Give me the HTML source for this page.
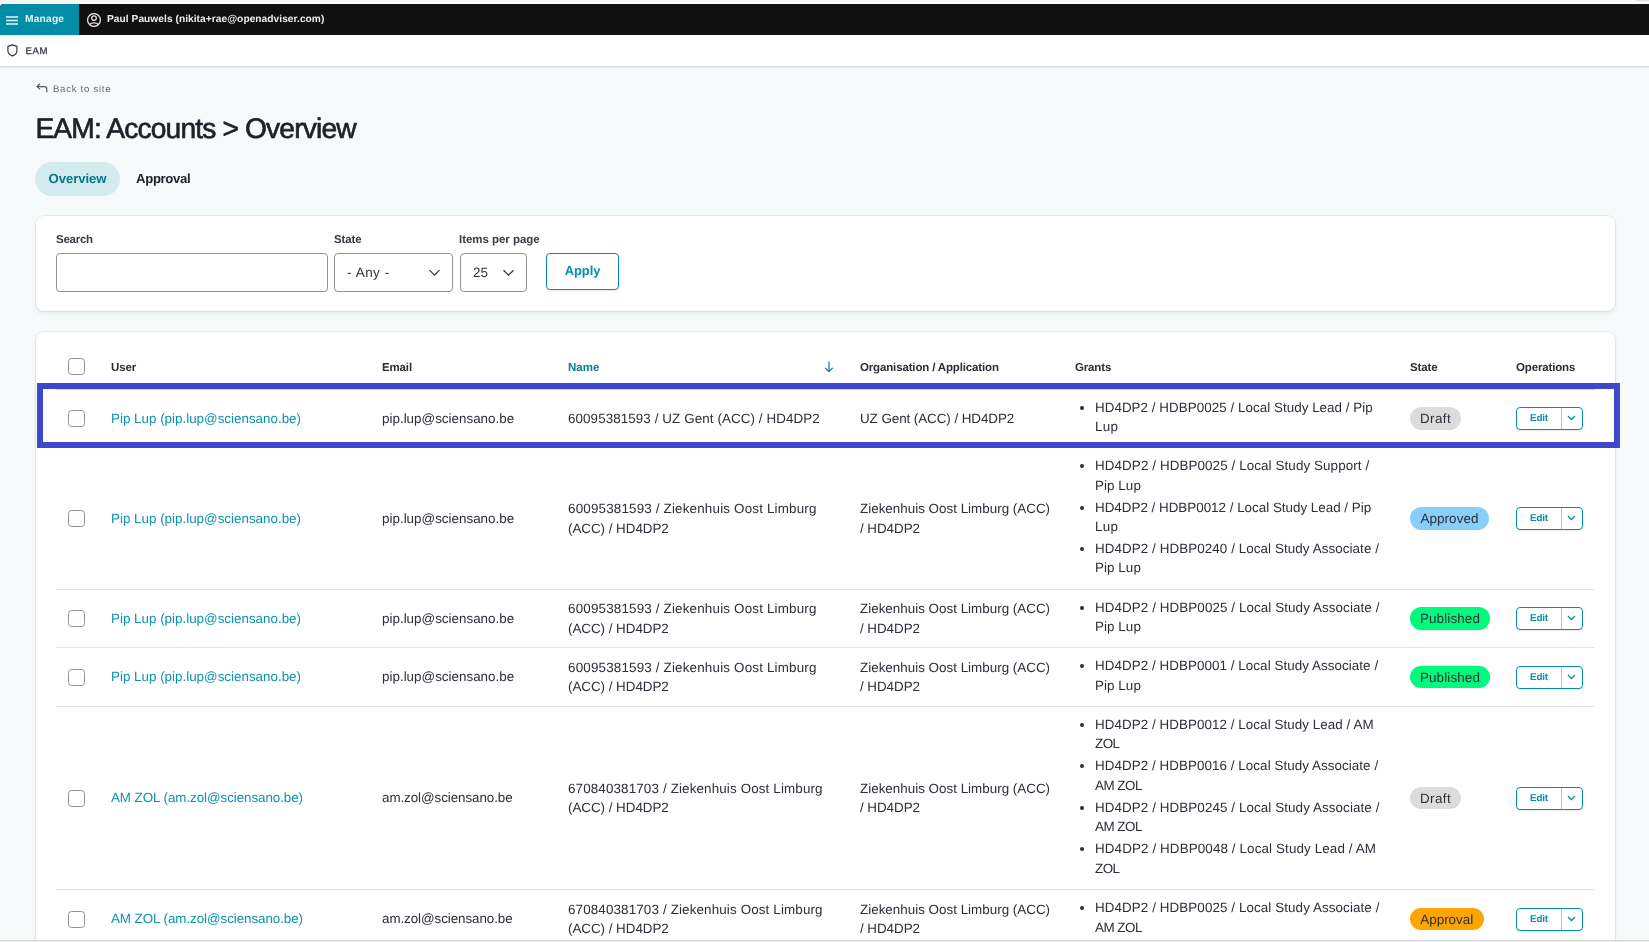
<!DOCTYPE html>
<html lang="en">
<head>
<meta charset="utf-8">
<title>EAM: Accounts &gt; Overview</title>
<style>
*{box-sizing:border-box;margin:0;padding:0}
html,body{width:1649px;height:942px;overflow:hidden}
body{font-family:"Liberation Sans",sans-serif;background:#f7fafb;color:#2d2e38;position:relative;font-size:13.5px}
a{text-decoration:none;color:inherit}
.abs{position:absolute}
#page{position:absolute;left:0;top:0;width:1649px;height:942px;overflow:hidden;will-change:transform;text-rendering:geometricPrecision;background:#f7fafb}
/* window chrome */
#topstrip{left:0;top:0;width:1649px;height:4px;background:#f6f6f6;border-bottom:1px solid #fdfbfb}
#toolbar{left:0;top:4px;width:1649px;height:31px;background:#101010;border-top-left-radius:4px}
#manage{left:0;top:0;width:79px;height:31px;background:#028da6;border-top-left-radius:4px;color:#fff}
#manage span{position:absolute;left:25px;top:11.4px;line-height:1;font-size:10.2px;font-weight:bold;letter-spacing:.22px;color:#e6f5f8}
#user{left:107px;top:11.4px;line-height:1;font-size:10.2px;font-weight:bold;color:#efefef;letter-spacing:.04px;white-space:nowrap}
#secbar{left:-6px;top:35px;width:1661px;height:31px;background:#fff;box-shadow:0 1px 2px rgba(0,0,20,.18)}
#secbar span{position:absolute;left:31.4px;top:11.7px;line-height:1;font-size:9.6px;color:#33343e;letter-spacing:.7px;-webkit-text-stroke:.25px #33343e}
#bottomedge{left:0;top:940px;width:1649px;height:2px;background:linear-gradient(#d9d9d9 0,#d9d9d9 50%,#ececec 50%,#ececec 100%)}
/* header */
#back{left:53px;top:84.8px;line-height:1;font-size:9.6px;color:#666872;letter-spacing:.72px;white-space:nowrap}
h1{position:absolute;left:35.4px;top:111.7px;font-size:28.2px;font-weight:normal;color:#1f2029;letter-spacing:-.85px;white-space:nowrap;-webkit-text-stroke:.65px #1f2029}
#tab1{left:35px;top:162px;width:85px;height:34px;border-radius:17px;background:#d3eaef;color:#04778c;font-weight:bold;font-size:13.2px;letter-spacing:-.1px;text-align:center;line-height:33px}
#tab2{left:136px;top:162px;height:34px;line-height:33px;font-weight:bold;font-size:13.2px;letter-spacing:-.35px;color:#1f2029}
/* cards */
.card{background:#fff;border-radius:8px;box-shadow:0 0 0 1px rgba(0,0,0,.055),0 2px 4px rgba(30,40,80,.09)}
#filters{left:36px;top:216px;width:1579px;height:95px}
#tablecard{left:36px;top:332px;width:1579px;height:640px}
.lbl{font-size:11.5px;font-weight:bold;color:#3a3b45;white-space:nowrap;letter-spacing:-.15px;margin-top:.7px}
.seltxt{position:absolute;left:12px;top:11px;font-size:13.5px;color:#33343e;white-space:nowrap}
#apply{left:510px;top:37px;width:73px;height:37px;border:1px solid #058fa8;border-radius:4px;color:#058fa8;font-weight:bold;font-size:13px;letter-spacing:-.1px;text-align:center;line-height:33px;background:#fff;box-shadow:0 1px 2px rgba(0,0,0,.1)}
.inp{background:#fff;border:1px solid #8e929c;border-radius:4px;height:39px}
/*TABLE*/
.row{left:20px;width:1539px;border-bottom:1px solid #e3e3e5}
.row.hdr{border-bottom:1px solid #d6d7db}
.c{position:absolute;top:0;bottom:0;display:flex;align-items:center;white-space:nowrap;font-size:13.4px;line-height:19.3px;color:#2d2e38}
.c0{left:12px}.c1{left:55px}.c2{left:326px}.c3{left:512px}.c4{left:804px}.c5{left:1019px}.c6{left:1354px}.c7{left:1460px}
.th{font-size:11.5px;font-weight:bold;color:#2d2e38;padding-top:3.5px;letter-spacing:-.15px}
.thl{color:#0a7d92;letter-spacing:0}
.cb{display:block;width:17px;height:17px;border:1px solid #8e929c;border-radius:3.5px;background:#fff}
.lnk{color:#0c93ad}
.c5 ul{list-style:none;padding-left:20px;position:relative;top:-1.5px}
.c5 li{position:relative;margin:0 0 2.9px}
.c5 li:last-child{margin-bottom:0}
.c5 li:before{content:"";position:absolute;left:-15px;top:8px;width:4px;height:4px;border-radius:50%;background:#2d2e38}
.pill{display:inline-block;height:22.7px;line-height:24.6px;border-radius:12px;padding:0;text-align:center;font-size:13.4px;color:#2d2e38}
.pill.draft{background:#dcdcdc;width:51px;letter-spacing:.4px}.pill.approved{background:#87cefa;width:79px;letter-spacing:.1px}.pill.published{background:#00fa7e;width:80px;letter-spacing:.15px}.pill.approval{background:#ffa500;width:73.5px}
.ops{display:block;position:relative;width:67px;height:23px;border:1px solid #058fa8;border-radius:4px;background:#fff;box-shadow:0 1px 1px rgba(0,0,0,.08)}
.ops b{position:absolute;left:0;top:0;width:45px;height:21px;line-height:22px;text-align:center;font-size:9.8px;letter-spacing:-.15px;color:#058fa8;border-right:1px solid #9fd0da}
.ops i{position:absolute;left:44.2px;top:-.1px;width:20px;height:21px;display:flex;align-items:center;justify-content:center}
#hl{left:37px;top:383px;width:1583px;height:65px;border:6px solid #3f48cc}
/*ENDTABLE*/
</style>
</head>
<body>
<div id="page">
<div id="topstrip" class="abs"></div>
<div id="smudge" class="abs" style="left:1637px;top:0;width:12px;height:1px;background:#dedede"></div>
<div id="toolbar" class="abs">
  <div id="manage" class="abs">
    <svg class="abs" style="left:6px;top:11.5px" width="12" height="9" viewBox="0 0 12 9"><path d="M0 1h12M0 4.5h12M0 8h12" stroke="#e6f5f8" stroke-width="1.5" fill="none"/></svg>
    <span>Manage</span>
  </div>
  <svg class="abs" style="left:87px;top:9px" width="14" height="14" viewBox="0 0 14 14" fill="none" stroke="#e4e4e4" stroke-width="1.25"><circle cx="7" cy="7" r="6.4"/><circle cx="7" cy="5.1" r="2.35"/><path d="M2.6 11.5C3.6 10.4 5 9.95 7 9.95s3.4.45 4.4 1.55"/></svg>
  <div id="user" class="abs">Paul Pauwels (nikita+rae@openadviser.com)</div>
</div>
<div id="secbar" class="abs">
  <svg class="abs" style="left:13px;top:9px" width="12" height="13" viewBox="0 0 12 13" fill="none" stroke="#33343e" stroke-width="1.15" stroke-linejoin="round"><path d="M5.4 .85L.9 2.35v4.3c0 2.4 1.8 4.2 4.5 5.2 2.7-1 4.5-2.8 4.5-5.2v-4.3z"/></svg>
  <span>EAM</span>
</div>

<svg class="abs" style="left:36px;top:83px" width="12" height="10" viewBox="0 0 12 10" fill="none" stroke="#555762" stroke-width="1.2"><path d="M4 .8L1 3.6l3 2.8M1 3.6h7.2c1.6 0 2.6 1 2.6 2.6v3"/></svg>
<div id="back" class="abs">Back to site</div>
<h1>EAM: Accounts &gt; Overview</h1>
<div id="tab1" class="abs">Overview</div>
<div id="tab2" class="abs">Approval</div>

<div id="filters" class="abs card">
  <div class="abs lbl" style="left:20px;top:17px;letter-spacing:-.25px">Search</div>
  <div class="abs inp" style="left:20px;top:37px;width:272px"></div>
  <div class="abs lbl" style="left:298px;top:17px">State</div>
  <div class="abs inp" style="left:298px;top:37px;width:119px"><span class="seltxt" style="letter-spacing:.35px;word-spacing:.6px">- Any -</span>
    <svg class="abs chev" style="left:93px;top:15px" width="13" height="8" viewBox="0 0 13 8"><path d="M1.5 1.2l5 5 5-5" fill="none" stroke="#33343e" stroke-width="1.15"/></svg></div>
  <div class="abs lbl" style="left:423px;top:17px;letter-spacing:-.04px">Items per page</div>
  <div class="abs inp" style="left:424px;top:37px;width:67px"><span class="seltxt">25</span>
    <svg class="abs chev" style="left:41px;top:15px" width="13" height="8" viewBox="0 0 13 8"><path d="M1.5 1.2l5 5 5-5" fill="none" stroke="#33343e" stroke-width="1.3"/></svg></div>
  <div class="abs" id="apply">Apply</div>
</div>

<div id="tablecard" class="abs card">
<div class="abs row hdr" style="top:12px;height:46px">
<div class="c c0"><i class="cb"></i></div>
<div class="c c1 th">User</div><div class="c c2 th">Email</div><div class="c c3 th thl">Name</div>
<svg class="abs" style="left:767.7px;top:17px" width="10" height="12" viewBox="0 0 10 12"><path d="M5 .5v10M1.2 6.8L5 10.6l3.8-3.8" fill="none" stroke="#0a7d92" stroke-width="1.2"/></svg>
<div class="c c4 th">Organisation / Application</div><div class="c c5 th">Grants</div><div class="c c6 th">State</div><div class="c c7 th">Operations</div>
</div>
<div class="abs row" style="top:58px;height:58px">
<div class="c c0"><i class="cb"></i></div>
<div class="c c1"><a class="lnk">Pip Lup (pip.lup@sciensano.be)</a></div>
<div class="c c2"><span style="letter-spacing:0.01px">pip.lup@sciensano.be</span></div>
<div class="c c3"><div><span style="letter-spacing:0.09px">60095381593 / UZ Gent (ACC) / HD4DP2</span></div></div>
<div class="c c4"><div><span style="letter-spacing:-0.06px">UZ Gent (ACC) / HD4DP2</span></div></div>
<div class="c c5"><ul><li><span style="letter-spacing:0.04px">HD4DP2 / HDBP0025 / Local Study Lead / Pip</span><br><span style="letter-spacing:0.3px">Lup</span></li></ul></div>
<div class="c c6"><span class="pill draft">Draft</span></div>
<div class="c c7"><span class="ops"><b>Edit</b><i><svg width="9" height="6" viewBox="0 0 9 6"><path d="M1 1l3.5 3.5L8 1" fill="none" stroke="#058fa8" stroke-width="1.3"/></svg></i></span></div>
</div>
<div class="abs row" style="top:116px;height:142px">
<div class="c c0"><i class="cb"></i></div>
<div class="c c1"><a class="lnk">Pip Lup (pip.lup@sciensano.be)</a></div>
<div class="c c2"><span style="letter-spacing:0.01px">pip.lup@sciensano.be</span></div>
<div class="c c3"><div><span style="letter-spacing:0.18px">60095381593 / Ziekenhuis Oost Limburg</span><br><span style="letter-spacing:-0.03px">(ACC) / HD4DP2</span></div></div>
<div class="c c4"><div><span style="letter-spacing:0.01px">Ziekenhuis Oost Limburg (ACC)</span><br><span style="letter-spacing:-0.04px">/ HD4DP2</span></div></div>
<div class="c c5"><ul><li><span style="letter-spacing:0.1px">HD4DP2 / HDBP0025 / Local Study Support /</span><br><span style="letter-spacing:0.07px">Pip Lup</span></li><li>HD4DP2 / HDBP0012 / Local Study Lead / Pip<br><span style="letter-spacing:0.3px">Lup</span></li><li><span style="letter-spacing:0.08px">HD4DP2 / HDBP0240 / Local Study Associate /</span><br><span style="letter-spacing:0.07px">Pip Lup</span></li></ul></div>
<div class="c c6"><span class="pill approved">Approved</span></div>
<div class="c c7"><span class="ops"><b>Edit</b><i><svg width="9" height="6" viewBox="0 0 9 6"><path d="M1 1l3.5 3.5L8 1" fill="none" stroke="#058fa8" stroke-width="1.3"/></svg></i></span></div>
</div>
<div class="abs row" style="top:258px;height:58px">
<div class="c c0"><i class="cb"></i></div>
<div class="c c1"><a class="lnk">Pip Lup (pip.lup@sciensano.be)</a></div>
<div class="c c2"><span style="letter-spacing:0.01px">pip.lup@sciensano.be</span></div>
<div class="c c3"><div><span style="letter-spacing:0.18px">60095381593 / Ziekenhuis Oost Limburg</span><br><span style="letter-spacing:-0.03px">(ACC) / HD4DP2</span></div></div>
<div class="c c4"><div><span style="letter-spacing:0.01px">Ziekenhuis Oost Limburg (ACC)</span><br><span style="letter-spacing:-0.04px">/ HD4DP2</span></div></div>
<div class="c c5"><ul><li><span style="letter-spacing:0.09px">HD4DP2 / HDBP0025 / Local Study Associate /</span><br><span style="letter-spacing:0.07px">Pip Lup</span></li></ul></div>
<div class="c c6"><span class="pill published">Published</span></div>
<div class="c c7"><span class="ops"><b>Edit</b><i><svg width="9" height="6" viewBox="0 0 9 6"><path d="M1 1l3.5 3.5L8 1" fill="none" stroke="#058fa8" stroke-width="1.3"/></svg></i></span></div>
</div>
<div class="abs row" style="top:316px;height:59px">
<div class="c c0"><i class="cb"></i></div>
<div class="c c1"><a class="lnk">Pip Lup (pip.lup@sciensano.be)</a></div>
<div class="c c2"><span style="letter-spacing:0.01px">pip.lup@sciensano.be</span></div>
<div class="c c3"><div><span style="letter-spacing:0.18px">60095381593 / Ziekenhuis Oost Limburg</span><br><span style="letter-spacing:-0.03px">(ACC) / HD4DP2</span></div></div>
<div class="c c4"><div><span style="letter-spacing:0.01px">Ziekenhuis Oost Limburg (ACC)</span><br><span style="letter-spacing:-0.04px">/ HD4DP2</span></div></div>
<div class="c c5"><ul><li><span style="letter-spacing:0.06px">HD4DP2 / HDBP0001 / Local Study Associate /</span><br><span style="letter-spacing:0.07px">Pip Lup</span></li></ul></div>
<div class="c c6"><span class="pill published">Published</span></div>
<div class="c c7"><span class="ops"><b>Edit</b><i><svg width="9" height="6" viewBox="0 0 9 6"><path d="M1 1l3.5 3.5L8 1" fill="none" stroke="#058fa8" stroke-width="1.3"/></svg></i></span></div>
</div>
<div class="abs row" style="top:375px;height:183px">
<div class="c c0"><i class="cb"></i></div>
<div class="c c1"><a class="lnk"><span style="letter-spacing:-0.07px">AM ZOL (am.zol@sciensano.be)</span></a></div>
<div class="c c2"><span style="letter-spacing:-0.07px">am.zol@sciensano.be</span></div>
<div class="c c3"><div><span style="letter-spacing:0.14px">670840381703 / Ziekenhuis Oost Limburg</span><br><span style="letter-spacing:-0.03px">(ACC) / HD4DP2</span></div></div>
<div class="c c4"><div><span style="letter-spacing:0.01px">Ziekenhuis Oost Limburg (ACC)</span><br><span style="letter-spacing:-0.04px">/ HD4DP2</span></div></div>
<div class="c c5"><ul><li><span style="letter-spacing:0.06px">HD4DP2 / HDBP0012 / Local Study Lead / AM</span><br><span style="letter-spacing:-0.5px">ZOL</span></li><li><span style="letter-spacing:0.06px">HD4DP2 / HDBP0016 / Local Study Associate /</span><br><span style="letter-spacing:-0.48px">AM ZOL</span></li><li><span style="letter-spacing:0.09px">HD4DP2 / HDBP0245 / Local Study Associate /</span><br><span style="letter-spacing:-0.48px">AM ZOL</span></li><li><span style="letter-spacing:0.12px">HD4DP2 / HDBP0048 / Local Study Lead / AM</span><br><span style="letter-spacing:-0.5px">ZOL</span></li></ul></div>
<div class="c c6"><span class="pill draft">Draft</span></div>
<div class="c c7"><span class="ops"><b>Edit</b><i><svg width="9" height="6" viewBox="0 0 9 6"><path d="M1 1l3.5 3.5L8 1" fill="none" stroke="#058fa8" stroke-width="1.3"/></svg></i></span></div>
</div>
<div class="abs row" style="top:558px;height:59px">
<div class="c c0"><i class="cb"></i></div>
<div class="c c1"><a class="lnk"><span style="letter-spacing:-0.07px">AM ZOL (am.zol@sciensano.be)</span></a></div>
<div class="c c2"><span style="letter-spacing:-0.07px">am.zol@sciensano.be</span></div>
<div class="c c3"><div><span style="letter-spacing:0.14px">670840381703 / Ziekenhuis Oost Limburg</span><br><span style="letter-spacing:-0.03px">(ACC) / HD4DP2</span></div></div>
<div class="c c4"><div><span style="letter-spacing:0.01px">Ziekenhuis Oost Limburg (ACC)</span><br><span style="letter-spacing:-0.04px">/ HD4DP2</span></div></div>
<div class="c c5"><ul><li><span style="letter-spacing:0.09px">HD4DP2 / HDBP0025 / Local Study Associate /</span><br><span style="letter-spacing:-0.48px">AM ZOL</span></li></ul></div>
<div class="c c6"><span class="pill approval">Approval</span></div>
<div class="c c7"><span class="ops"><b>Edit</b><i><svg width="9" height="6" viewBox="0 0 9 6"><path d="M1 1l3.5 3.5L8 1" fill="none" stroke="#058fa8" stroke-width="1.3"/></svg></i></span></div>
</div>
</div>
<div id="hl" class="abs"></div>
<div id="bottomedge" class="abs"></div>
</div>
</body>
</html>
